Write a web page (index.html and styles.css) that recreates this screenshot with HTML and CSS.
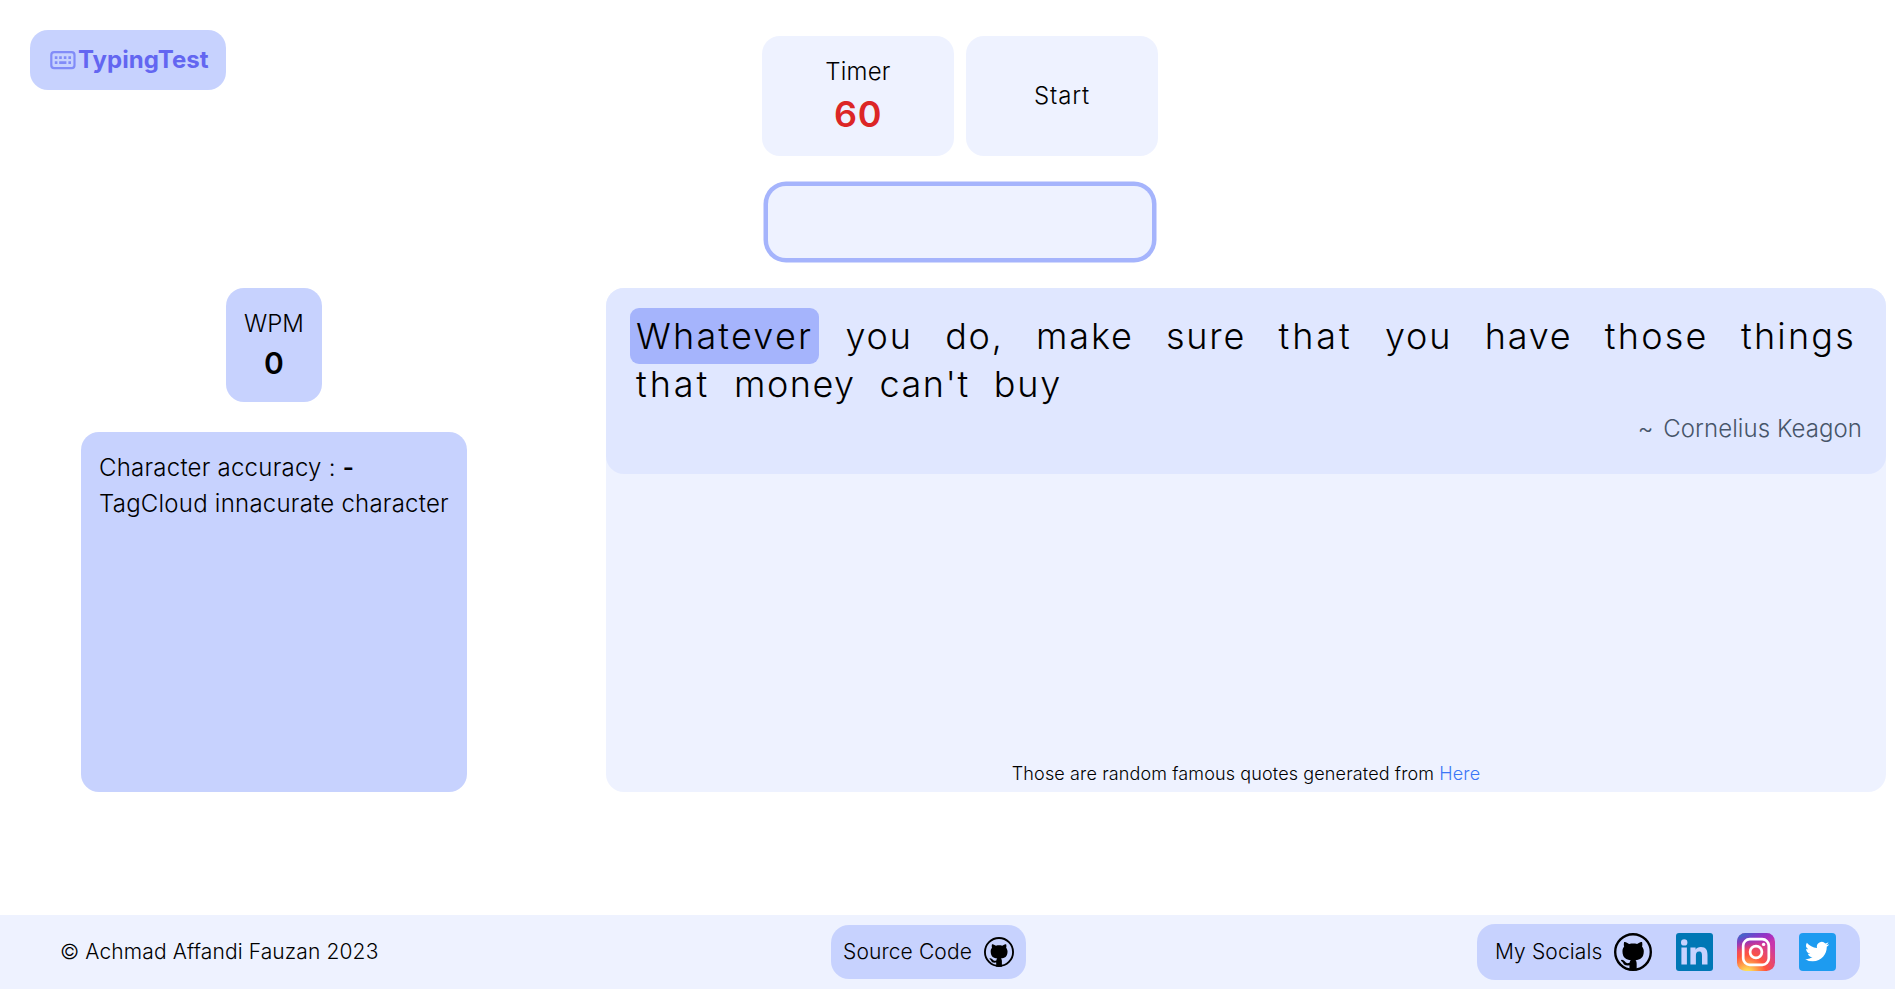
FILE: index.html
```html
<!DOCTYPE html>
<html lang="en">
<head>
<meta charset="utf-8">
<title>TypingTest</title>
<link rel="stylesheet" href="styles.css">
</head>
<body>
<svg class="sprite" aria-hidden="true">
  <symbol id="github" viewBox="0 0 16 16">
    <circle cx="8" cy="8" r="7.5" fill="none" stroke="#000" stroke-width="1"/>
    <path d="M6.5 15.8V13.6c-1.9.3-2.4-.4-2.6-.85-.2-.4-.45-.75-.75-.9-.3-.15-.3-.55.15-.55.65.02 1.1.5 1.3.75.6.8 1.3.7 1.95.5.07-.52.28-.87.51-1.07-1.78-.2-3.5-.89-3.5-3.75 0-.87.31-1.49.72-2-.08-.2-.26-.92-.02-1.92 0 0 .77-.1 2.1.82.64-.18 1.12-.2 1.66-.2s1.1.02 1.7.2c1.33-.94 2.1-.82 2.1-.82.24 1 .06 1.72-.02 1.92.41.56.75 1.17.75 2 0 2.87-1.6 3.55-3.5 3.75.29.25.49.73.49 1.48V15.8z"/>
  </symbol>
</svg>
<div class="page">
  <header class="top">
    <a class="logo">
      <svg class="logo-icon" viewBox="0 0 27 27" fill="none" stroke="currentColor">
        <rect x="2.3" y="5.1" width="23.2" height="16" rx="2.8" stroke-width="2.2"/>
        <path d="M5.8 10.6h2.6M10.2 10.6h2.6M14.8 10.6h2.6M19.4 10.6h2.6M5.8 15.6h2.6M10.2 15.6h7.2M19.4 15.6h2.6" stroke-width="2.6"/>
      </svg>TypingTest</a>
    <div class="controls">
      <div class="tiles">
        <div class="tile"><span>Timer</span><strong class="time">60</strong></div>
        <button class="tile start">Start</button>
      </div>
      <input class="entry" type="text" aria-label="Type here">
    </div>
  </header>
  <main class="main">
    <section class="stats">
      <div class="wpm"><span>WPM</span><strong class="wpm-value">0</strong></div>
      <div class="accuracy">
        <p>Character accuracy : <b>-</b></p>
        <p>TagCloud innacurate character</p>
      </div>
    </section>
    <section class="panel">
      <blockquote class="quote">
        <p class="words"><span class="word current">Whatever</span> <span class="word">you</span> <span class="word">do,</span> <span class="word">make</span> <span class="word">sure</span> <span class="word wider">that</span> <span class="word">you</span> <span class="word">have</span> <span class="word wide">those</span> <span class="word wide">things</span> <span class="word wider">that</span> <span class="word tight">money</span> <span class="word tight">can't</span> <span class="word">buy</span></p>
        <p class="author"><span class="tilde">~</span> Cornelius Keagon</p>
      </blockquote>
      <p class="source">Those are random famous quotes generated from <a>Here</a></p>
    </section>
  </main>
  <footer class="footer">
    <p class="copyright">© Achmad Affandi Fauzan 2023</p>
    <a class="pill code">Source Code <svg class="icon-sm"><use href="#github"/></svg></a>
    <div class="pill socials">My Socials
      <div class="icons">
        <svg class="icon"><use href="#github"/></svg>
        <svg class="icon" viewBox="0 0 38 38">
          <rect width="37" height="38" rx="3" fill="#0077b5"/>
          <g fill="#c7d2fe"><circle cx="8.2" cy="9.4" r="3.2"/><path d="M5.4 14.4h5.5v17H5.4zM14.4 14.4h5.2v2.3c.9-1.6 2.7-2.7 5.3-2.7 5.2 0 6.6 3.2 6.6 8v9.4H26v-8.5c0-2.3-.3-4.3-2.9-4.3s-3.2 2-3.2 4.2v8.6h-5.5z"/></g>
        </svg>
        <svg class="icon" viewBox="0 0 38 38">
          <defs>
            <radialGradient id="ig-warm" cx=".27" cy="1.08" r="1"><stop offset="0" stop-color="#fd5"/><stop offset=".1" stop-color="#fd5"/><stop offset=".5" stop-color="#ff543e"/><stop offset="1" stop-color="#c837ab"/></radialGradient>
            <radialGradient id="ig-cool" gradientUnits="userSpaceOnUse" cx="0" cy="0" r="1" gradientTransform="matrix(3.3 16.5 -68 13.6 -6.3 2.7)"><stop offset="0" stop-color="#3771c8"/><stop offset=".13" stop-color="#3771c8"/><stop offset="1" stop-color="#60f" stop-opacity="0"/></radialGradient>
          </defs>
          <rect width="38" height="38" rx="8.5" fill="url(#ig-warm)"/>
          <rect width="38" height="38" rx="8.5" fill="url(#ig-cool)"/>
          <g fill="none" stroke="#fff" stroke-width="2.7"><rect x="6.2" y="6.2" width="25.6" height="25.6" rx="6.6"/><circle cx="19" cy="19" r="5.9"/></g>
          <circle cx="26.6" cy="11.4" r="1.7" fill="#fff"/>
        </svg>
        <svg class="icon" viewBox="0 0 38 38">
          <rect width="37" height="38" rx="4" fill="#1d9bf0"/>
          <path transform="translate(6.2 6.6)" fill="#fff" d="M23.95 4.57a10 10 0 0 1-2.82.77 4.96 4.96 0 0 0 2.16-2.72c-.95.55-2 .96-3.13 1.18a4.92 4.92 0 0 0-8.38 4.49C7.69 8.1 4.07 6.13 1.64 3.16a4.92 4.92 0 0 0 1.52 6.57 4.9 4.9 0 0 1-2.23-.61v.06a4.92 4.92 0 0 0 3.95 4.83 5 5 0 0 1-2.21.08 4.94 4.94 0 0 0 4.6 3.42A9.87 9.87 0 0 1 0 19.54a14 14 0 0 0 7.55 2.21c9.05 0 14-7.5 14-13.98 0-.21 0-.42-.02-.63a9.94 9.94 0 0 0 2.46-2.55z"/>
        </svg>
      </div>
    </div>
  </footer>
</div>
</body>
</html>
```

FILE: styles.css
```css
html { font-size: 24px; }
*, *::before, *::after { box-sizing: border-box; }
body {
  margin: 0;
  background: #fff;
  color: #000;
  font: 300 1rem/1.5 Inter, "Liberation Sans", sans-serif;
}
p, blockquote { margin: 0; }
.sprite { position: absolute; width: 0; height: 0; }
.page { display: flex; flex-direction: column; height: 989px; overflow: hidden; }

.top {
  display: grid;
  grid-template-columns: 1fr 396px 1fr;
  padding: 30px 5px 0 30px;
  height: 288px;
}
.logo {
  display: flex;
  align-items: center;
  justify-self: start;
  width: 196px;
  height: 60px;
  padding-left: 19px;
  gap: 2px;
  border-radius: .75rem;
  background: #c7d2fe;
  color: #6366f1;
  font-weight: 700;
  letter-spacing: .04px;
}
.logo-icon { width: 27px; height: 27px; flex: none; color: #818cf8; }
.controls { display: flex; flex-direction: column; align-items: center; padding-top: 6px; gap: 30px; }
.tiles { display: flex; gap: 12px; }
.tile {
  display: flex;
  flex-direction: column;
  align-items: center;
  justify-content: center;
  width: 192px;
  height: 120px;
  padding: 0;
  border: 0;
  border-radius: .75rem;
  background: #eef2ff;
  color: #000;
  font: inherit;
  letter-spacing: .2px;
}
.start { letter-spacing: .8px; }
.time { color: #dc2626; font-size: 1.5rem; line-height: 2rem; font-weight: 600; letter-spacing: .6px; }
.entry {
  width: 384px;
  height: 72px;
  padding: 0 12px;
  border: 0;
  border-radius: .75rem;
  background: #eef2ff;
  box-shadow: 0 0 0 4.5px #a5b4fc;
  font: inherit;
}

.main { display: flex; height: 504px; padding-right: 9px; }
.stats { display: flex; flex-direction: column; align-items: center; gap: 30px; width: 548px; margin-right: 58px; }
.wpm {
  display: flex;
  flex-direction: column;
  align-items: center;
  width: 96px;
  padding: 18px 0;
  border-radius: .75rem;
  background: #c7d2fe;
}
.wpm-value { font-size: 1.25rem; line-height: 1.75rem; font-weight: 600; }
.accuracy {
  width: 386px;
  height: 360px;
  padding: 18px;
  border-radius: .75rem;
  background: #c7d2fe;
  white-space: nowrap;
  letter-spacing: .23px;
}
.accuracy b { font-weight: 600; }

.panel {
  display: flex;
  flex-direction: column;
  justify-content: space-between;
  flex: 1;
  border-radius: .75rem;
  background: #eef2ff;
}
.quote { padding: 24px; border-radius: .75rem; background: #e0e7ff; }
.words { font-size: 1.5rem; line-height: 2rem; letter-spacing: .05em; text-align: justify; }
.word { padding: 6px; border-radius: .375rem; }
.current { background: #a5b4fc; letter-spacing: 2.2px; }
.wide { letter-spacing: 2.2px; }
.wider { letter-spacing: 2.9px; }
.tight { letter-spacing: 1.5px; }
.author { color: #475569; line-height: 42px; letter-spacing: .06px; text-align: right; }
.tilde { margin-right: 3px; }
.source { padding-bottom: 6px; font-size: .75rem; line-height: 1rem; letter-spacing: .13px; text-align: center; }
.source a { color: #3b76f6; }

.footer {
  display: flex;
  align-items: center;
  height: 74px;
  margin-top: auto;
  padding: 0 35px 0 60px;
  background: #eef2ff;
  font-size: .875rem;
  line-height: 1.25rem;
  letter-spacing: .12px;
}
.copyright { width: 771px; }
.pill {
  display: flex;
  align-items: center;
  justify-content: space-between;
  border-radius: .75rem;
  background: #c7d2fe;
  white-space: nowrap;
}
.code { width: 195px; height: 54px; padding: 0 12px; }
.icon-sm { width: 30px; height: 30px; }
.socials { width: 383px; height: 56px; padding: 0 23px 0 18px; margin-left: auto; }
.icons { display: flex; gap: 23.67px; }
.icon { width: 38px; height: 38px; }
```
